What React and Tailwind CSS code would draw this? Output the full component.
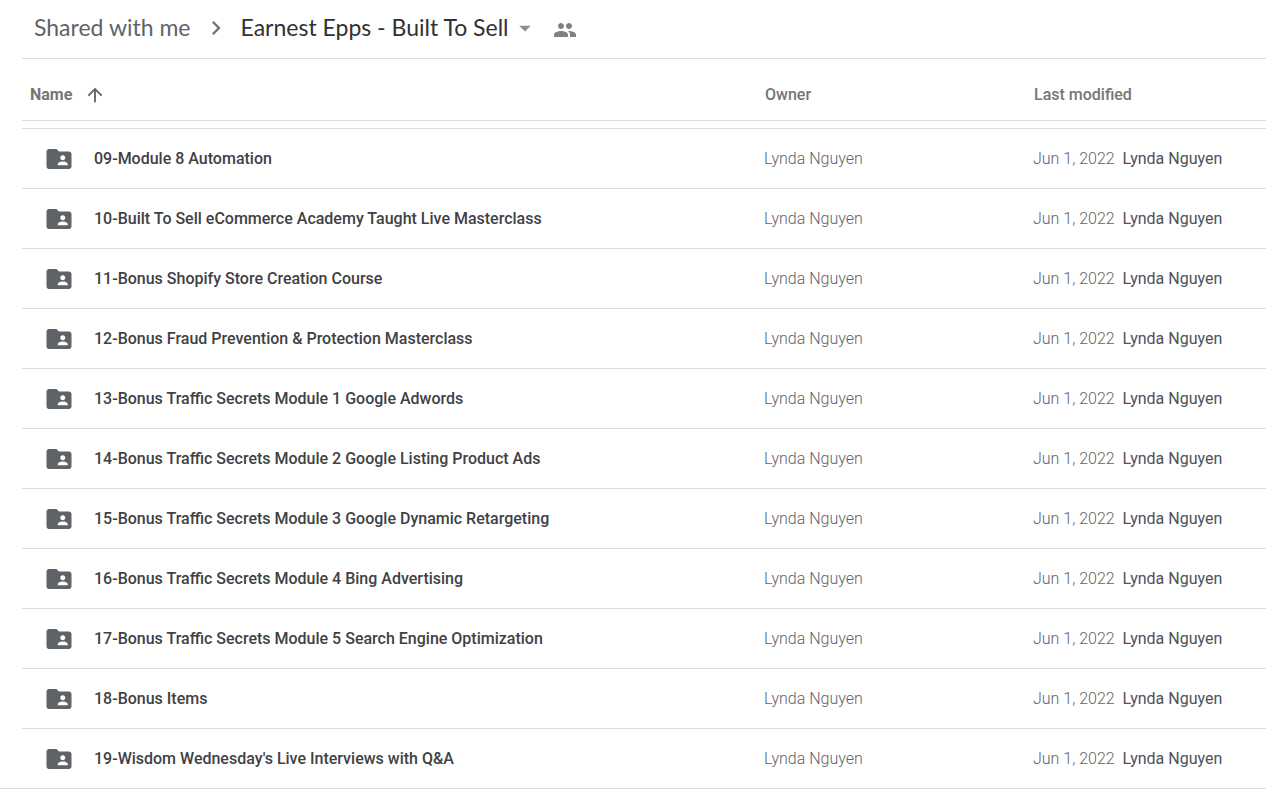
import { MdArrowDropDown, MdArrowUpward, MdChevronRight, MdFolderShared, MdPeople } from "react-icons/md";

const folders = [
  "09-Module 8 Automation",
  "10-Built To Sell eCommerce Academy Taught Live Masterclass",
  "11-Bonus Shopify Store Creation Course",
  "12-Bonus Fraud Prevention & Protection Masterclass",
  "13-Bonus Traffic Secrets Module 1 Google Adwords",
  "14-Bonus Traffic Secrets Module 2 Google Listing Product Ads",
  "15-Bonus Traffic Secrets Module 3 Google Dynamic Retargeting",
  "16-Bonus Traffic Secrets Module 4 Bing Advertising",
  "17-Bonus Traffic Secrets Module 5 Search Engine Optimization",
  "18-Bonus Items",
  "19-Wisdom Wednesday's Live Interviews with Q&A",
];

function Breadcrumbs() {
  return (
    <header className="flex h-[59px] items-center border-b border-[#dadce0] pb-0.5 pl-3 font-['Lato',sans-serif] text-[23px] leading-7">
      <nav aria-label="Breadcrumb" className="flex items-center">
        <a href="#shared" className="pb-0.5 text-[#5f6368]">Shared with me</a>
        <MdChevronRight className="mx-[11px] size-7 text-[#757575]" aria-hidden="true" />
        <button type="button" className="flex items-center gap-0.5 text-[#303134]">
          <span className="pb-0.5">Earnest Epps - Built To Sell</span>
          <MdArrowDropDown className="size-7 text-[#8f8f8f]" aria-hidden="true" />
        </button>
      </nav>
      <button type="button" aria-label="Manage people" className="ml-3.5 pt-1 text-[#808080]">
        <MdPeople className="size-6" />
      </button>
    </header>
  );
}

function FolderRow({ name }) {
  return (
    <tr className="h-[60px] border-b border-[#dadce0] last:border-b-0">
      <td className="pt-0.5 pl-[22px]">
        <a href="#folder" className="flex items-center gap-5 font-medium text-[#3f4145]">
          <MdFolderShared className="size-[30px] shrink-0 text-[#5f6368]" aria-hidden="true" />
          {name}
        </a>
      </td>
      <td className="pt-0.5 font-light text-[#5f6368]">Lynda Nguyen</td>
      <td className="pt-0.5 font-light text-[#5f6368]">
        Jun 1, 2022 <span className="ml-1 font-normal text-[#4f5155]">Lynda Nguyen</span>
      </td>
    </tr>
  );
}

export default function App() {
  return (
    <main className="border-b border-[#dadce0] bg-white pl-[22px] font-['Roboto',sans-serif] text-base">
      <Breadcrumbs />
      <table className="w-full table-fixed border-collapse text-left whitespace-nowrap">
        <colgroup>
          <col />
          <col className="w-[269px]" />
          <col className="w-[233px]" />
        </colgroup>
        <thead className="text-[#757575]">
          <tr className="h-[61px] border-b border-[#dadce0]">
            <th scope="col" className="pt-3 pl-2 font-bold" aria-sort="ascending">
              <button type="button" className="flex items-center gap-3">
                Name
                <MdArrowUpward className="size-[22px] text-[#5f6368]" aria-hidden="true" />
              </button>
            </th>
            <th scope="col" className="pt-3 pl-px font-medium">Owner</th>
            <th scope="col" className="pt-3 pl-px font-medium">Last modified</th>
          </tr>
          <tr className="h-2 border-b border-[#dadce0]" aria-hidden="true">
            <td colSpan={3} />
          </tr>
        </thead>
        <tbody>
          {folders.map((name) => (
            <FolderRow key={name} name={name} />
          ))}
        </tbody>
      </table>
    </main>
  );
}
